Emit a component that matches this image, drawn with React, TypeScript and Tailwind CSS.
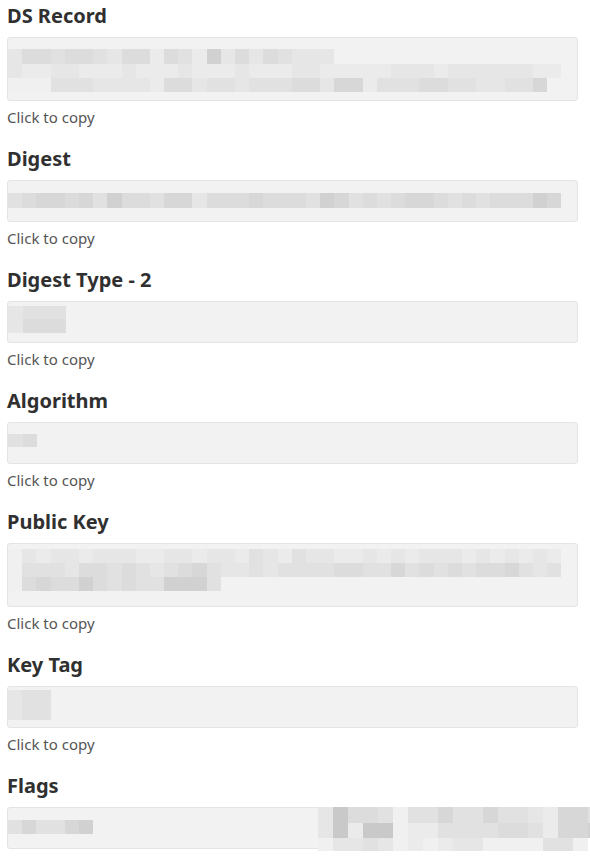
import React from "react";

const SHADE: Record<string, string> = {
  "0": "bg-transparent",
  w: "bg-[#f0f0f0]",
  "1": "bg-[#ebebeb]",
  "2": "bg-[#e6e6e6]",
  "3": "bg-[#e1e1e1]",
  "4": "bg-[#dcdcdc]",
  "5": "bg-[#d7d7d7]",
  "6": "bg-[#d1d1d1]",
  "7": "bg-[#c9c9c9]",
};

type Row = { cells: string; h: string; ml?: string };

function MosaicRow({ row, cw }: { row: Row; cw: string }) {
  return (
    <div className={`flex ${row.h} ${row.ml ?? ""}`}>
      {row.cells.split("").map((c, i) => (
        <div key={i} className={`${cw} h-full shrink-0 ${SHADE[c] ?? "bg-transparent"}`} />
      ))}
    </div>
  );
}

type Section = {
  title: string;
  boxH: string;
  pt: string;
  cw: string;
  rows: Row[];
};

const sections: Section[] = [
  {
    title: "DS Record",
    boxH: "h-[64px]",
    pt: "pt-[11px]",
    cw: "w-[14.2px]",
    rows: [
      { cells: "24434432441431624243222", h: "h-[15px]" },
      { cells: "211221112111211121112211111222122222211", h: "h-[14px]" },
      { cells: "www33322221442332333442551333443322335", h: "h-[14px]" },
    ],
  },
  {
    title: "Digest",
    boxH: "h-[42px]",
    pt: "pt-[12px]",
    cw: "w-[14.2px]",
    rows: [{ cells: "345545364435524445444365343455434344465", h: "h-[15px]" }],
  },
  {
    title: "Digest Type - 2",
    boxH: "h-[42px]",
    pt: "pt-[4px]",
    cw: "w-[14.5px]",
    rows: [
      { cells: "2333", h: "h-[13px]" },
      { cells: "2444", h: "h-[14px]" },
    ],
  },
  {
    title: "Algorithm",
    boxH: "h-[42px]",
    pt: "pt-[11px]",
    cw: "w-[14.5px]",
    rows: [{ cells: "34", h: "h-[13px]" }],
  },
  {
    title: "Public Key",
    boxH: "h-[64px]",
    pt: "pt-[5px]",
    cw: "w-[14.2px]",
    rows: [
      { cells: "w21221222112212213213221121212221212121", h: "h-[14px]" },
      { cells: "w33324434323453223233334433534343445323", h: "h-[14px]" },
      { cells: "w45446434336663", h: "h-[14px]" },
    ],
  },
  {
    title: "Key Tag",
    boxH: "h-[42px]",
    pt: "pt-[3px]",
    cw: "w-[14.2px]",
    rows: [
      { cells: "233", h: "h-[15px]" },
      { cells: "233", h: "h-[15px]" },
    ],
  },
  {
    title: "Flags",
    boxH: "h-[42px]",
    pt: "pt-[12px]",
    cw: "w-[14.2px]",
    rows: [{ cells: "353356", h: "h-[14px]" }],
  },
];

function FlagsOverlay() {
  const cw = "w-[15px]";
  const rows: Row[] = [
    { cells: "27443w3353353321553", h: "h-[16px]" },
    { cells: "27177w11333344315563", h: "h-[15px]" },
    { cells: "w2232w1w122wwww33w", h: "h-[13px]" },
  ];
  return (
    <div className="absolute left-[310px] top-[-4px] w-[272px] h-[52px] bg-white flex flex-col pt-[3px]">
      {rows.map((r, i) => (
        <MosaicRow key={i} row={r} cw={cw} />
      ))}
    </div>
  );
}

export default function App() {
  return (
    <div
      className="w-[590px] min-h-[857px] bg-white pt-[2px] px-[7px] overflow-hidden"
      style={{ fontFamily: '"Noto Sans", "Open Sans", Arial, sans-serif' }}
    >
      {sections.map((s, idx) => (
        <div key={s.title} className={idx === sections.length - 1 ? "" : "mb-[18px]"}>
          <h3 className="text-[20px] leading-[28px] font-bold text-[#303030]">{s.title}</h3>
          <div
            className={`relative mt-[7px] w-[571px] ${s.boxH} rounded-[3px] border border-[#e4e4e4] bg-[#f2f2f2]`}
          >
            <div className={`flex flex-col ${s.pt}`}>
              {s.rows.map((r, i) => (
                <MosaicRow key={i} row={r} cw={s.cw} />
              ))}
            </div>
            {s.title === "Flags" && <FlagsOverlay />}
          </div>
          {s.title !== "Flags" && (
            <p className="mt-[6px] text-[15px] leading-[20px] text-[#555555]">Click to copy</p>
          )}
        </div>
      ))}
    </div>
  );
}
